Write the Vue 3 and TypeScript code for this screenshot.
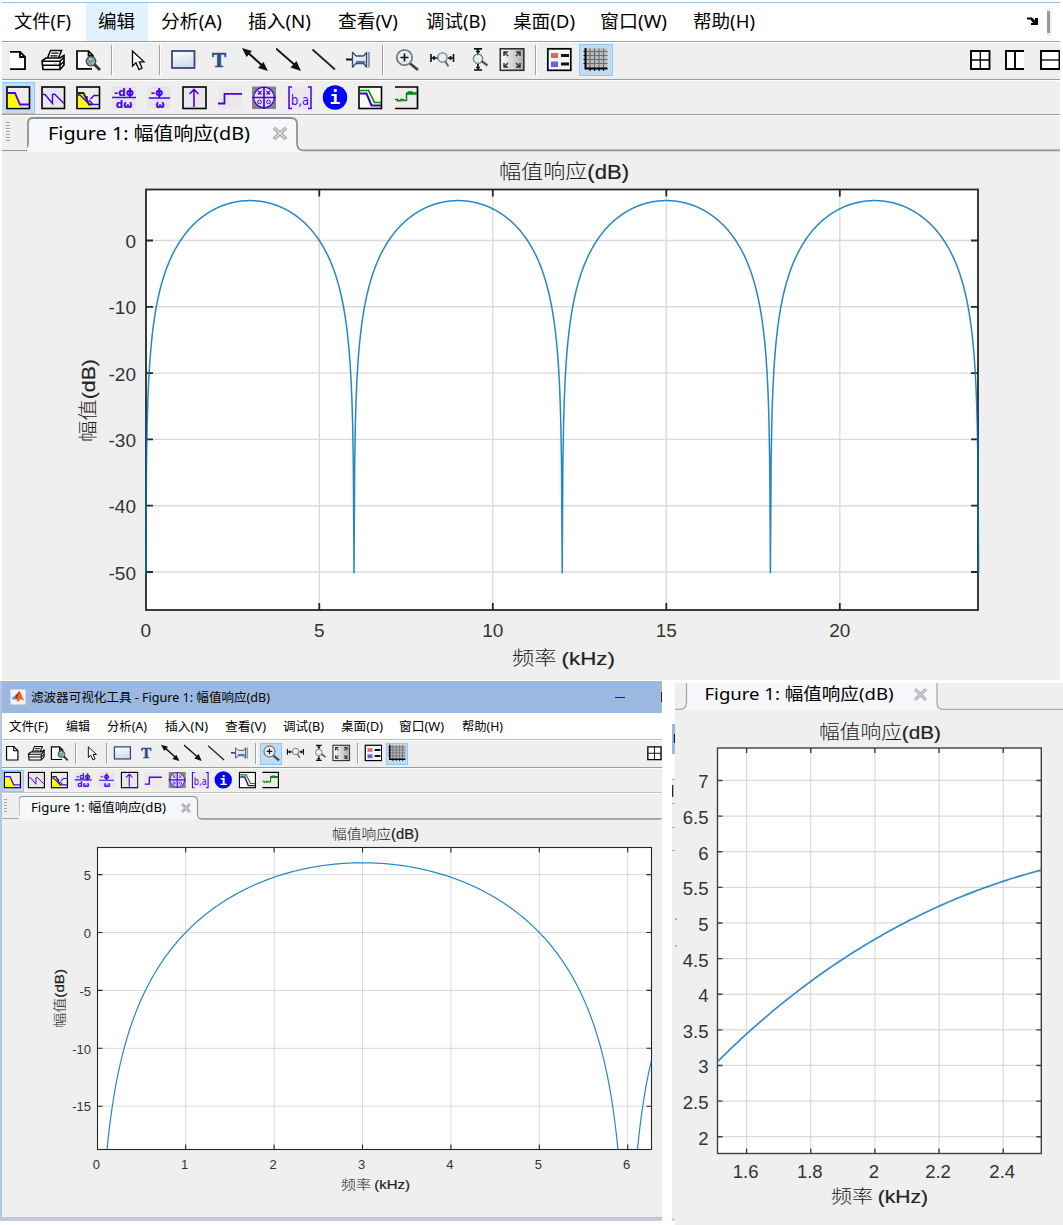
<script setup lang="ts">
interface Tool { icon: string; cx: number; active?: boolean; sep?: boolean }
interface Chart {
  view: [number, number, number, number]
  box: [number, number, number, number]
  x0: number; xs: number; y0: number; ys: number
  range: [number, number]; floor: number; step: number
  xt: [number, string][]; yt: [number, string][]
  font: number; labelY: number; labelX: number; tick: number; grid: number; stroke: number; frame: number
  title: [number, number, number, number]
  xlabel: [number, number, number, number]
  ylabel?: [number, number, number, number]
}

const menus = [
  { t: '文件(F)', x: 14, w: 57, sx: 9, sw: 39 },
  { t: '编辑', x: 98, w: 37, sx: 66, sw: 24, on: true },
  { t: '分析(A)', x: 161, w: 61, sx: 107, sw: 40 },
  { t: '插入(N)', x: 248, w: 63, sx: 165, sw: 43 },
  { t: '查看(V)', x: 338, w: 60, sx: 225, sw: 41 },
  { t: '调试(B)', x: 426, w: 60, sx: 283, sw: 41 },
  { t: '桌面(D)', x: 513, w: 62, sx: 341, sw: 42 },
  { t: '窗口(W)', x: 600, w: 67, sx: 399, sw: 45 },
  { t: '帮助(H)', x: 693, w: 62, sx: 462, sw: 41 },
]

const names1 = ['new', 'print', 'preview', '|', 'pointer', '|', 'rect', 'text', 'arrow2', 'arrow', 'line', 'pin', '|', 'zoomin', 'zoomx', 'zoomy', 'fit', '|', 'legend', 'grid']
const names2 = ['mag', 'phase', 'magphase', 'grpdelay', 'phdelay', 'impulse', 'stepresp', 'pz', 'coef', 'info', 'magest', 'noise']

function row(names: string[], centers: number[], active: string[]): Tool[] {
  return names.map((n, i) => ({ icon: n, cx: centers[i], sep: n === '|', active: active.includes(n) }))
}
const bigRow1 = row(names1, [18, 53, 88, 112, 138, 160, 183, 219, 255, 289, 324, 359, 383, 407, 442, 480, 512, 536, 559, 596], ['grid'])
const bigRow2 = row(names2, [18, 53, 88, 124, 159, 194, 229.5, 264, 300, 335, 370, 406], ['mag'])
const smallRow1 = row(names1, [12, 36, 59.5, 76, 92, 107, 122.5, 146, 170, 193, 216.5, 240, 256, 271, 295, 320, 341.5, 357.5, 373, 397], ['zoomin', 'grid'])
const smallRow2 = row(names2, [12.5, 36, 59.5, 83, 106, 129.5, 153, 177, 200, 223, 247, 270], ['mag'])

// distance from the previous slot's right edge, for slots that share one row
function gap(list: { cx: number }[], i: number, w: number, origin: number): string {
  const prev = i === 0 ? origin : list[i - 1].cx + w / 2
  return list[i].cx - w / 2 - prev + 'px'
}
function menuGap(i: number, small: boolean): string {
  const p = menus[i - 1]
  if (small) return menus[i].sx - (p ? p.sx + p.sw : 2) + 'px'
  return menus[i].x - (p ? p.x + p.w : 2) + 'px'
}

const num = (v: number[]): [number, string][] => v.map(n => [n, String(n)])
const main: Chart = {
  view: [2, 151, 1058, 529], box: [146, 189.5, 978, 610],
  x0: 145.8, xs: 34.7, y0: 240.5, ys: 6.63, range: [0, 24], floor: -50.2, step: 0.02,
  xt: num([0, 5, 10, 15, 20]), yt: num([0, -10, -20, -30, -40, -50]),
  font: 19, labelY: 637, labelX: 136, tick: 7, grid: 1.4, stroke: 1.5, frame: 1.8,
  title: [499, 179, 130, 20], xlabel: [512, 665, 103, 19], ylabel: [95, 442, 83, 19],
}
const zoomed: Chart = {
  view: [2, 819, 660, 398], box: [97.5, 847.5, 651.5, 1149.5],
  x0: 97.3, xs: 88.4, y0: 932.5, ys: 11.58, range: [0.05, 6.267], floor: -30, step: 0.01,
  xt: num([0, 1, 2, 3, 4, 5, 6]), yt: num([5, 0, -5, -10, -15]),
  font: 13, labelY: 1169, labelX: 91, tick: 5, grid: 1, stroke: 1.2, frame: 1.1,
  title: [332, 839, 87, 14], xlabel: [341, 1189, 69, 13], ylabel: [64, 1028, 59, 13],
}
const detail: Chart = {
  view: [675, 710, 388, 515], box: [717.5, 748, 1041.3, 1153.5],
  x0: 233.3, xs: 320.8, y0: 1279.2, ys: 71.25, range: [1.51, 2.519], floor: 0, step: 0.01,
  xt: num([1.6, 1.8, 2, 2.2, 2.4]), yt: num([7, 6.5, 6, 5.5, 5, 4.5, 4, 3.5, 3, 2.5, 2]),
  font: 18.5, labelY: 1178, labelX: 708.5, tick: 5, grid: 1.2, stroke: 1.7, frame: 1.4,
  title: [819, 739, 122, 19], xlabel: [831, 1203, 97, 18],
}
const px = (c: Chart, f: number) => c.x0 + f * c.xs
const py = (c: Chart, d: number) => c.y0 - d * c.ys
// magnitude of 1 - z^-8 at a 48 kHz sample rate, in dB
function curve(c: Chart): string {
  const pts: string[] = []
  const n = Math.round((c.range[1] - c.range[0]) / c.step)
  for (let i = 0; i <= n; i++) {
    const f = c.range[0] + ((c.range[1] - c.range[0]) * i) / n
    const m = Math.abs(2 * Math.sin((Math.PI * f) / 6))
    const d = Math.max(c.floor, 20 * Math.log10(Math.max(m, 1e-6)))
    pts.push(px(c, f).toFixed(2) + ',' + py(c, d).toFixed(2))
  }
  return pts.join(' ')
}
function frameTicks(c: Chart): string {
  const [l, t, r, b] = c.box
  let d = ''
  for (const [v] of c.xt) if (px(c, v) > l + 2) d += `M${px(c, v)} ${t}v${c.tick}M${px(c, v)} ${b}v${-c.tick}`
  for (const [v] of c.yt) d += `M${l} ${py(c, v)}h${c.tick}M${r} ${py(c, v)}h${-c.tick}`
  return d
}
function gridLines(c: Chart): string {
  const [l, t, r, b] = c.box
  let d = ''
  for (const [v] of c.xt) if (px(c, v) > l + 2) d += `M${px(c, v)} ${t}V${b}`
  for (const [v] of c.yt) d += `M${l} ${py(c, v)}H${r}`
  return d
}
const windows = [
  { key: 'big', small: false, row1: bigRow1, row2: bigRow2, chart: main },
  { key: 'small', small: true, row1: smallRow1, row2: smallRow2, chart: zoomed },
]
const allCharts = [main, zoomed, detail]
</script>

<template>
  <div class="page">
    <svg class="defs" width="0" height="0">
      <defs>
        <linearGradient id="sky" x1="0" y1="0" x2="0.3" y2="1"><stop offset="0" stop-color="#fff" /><stop offset="1" stop-color="#cfdcec" /></linearGradient>
        <linearGradient id="steel" x1="0" y1="0" x2="1" y2="0"><stop offset="0" stop-color="#fff" /><stop offset="1" stop-color="#aaa" /></linearGradient>
        <symbol id="i-new" viewBox="0 0 26 26"><path d="M5 5H15L20 10V22H5Z" fill="#fff" /><path d="M5 4.8H15L20 9.8V22.2H5M15 5V10H20" fill="none" stroke="#000" stroke-width="1.8" /></symbol>
        <symbol id="i-newfull" viewBox="0 0 26 26"><path d="M5 3.500H15L21 9.500V22.500H5Z" fill="#fff" stroke="#000" stroke-width="1.700" /><path d="M15 3.500V9.500H21" fill="none" stroke="#000" stroke-width="1.500" /></symbol>
        <symbol id="i-print" viewBox="0 0 26 26"><path d="M7.500 11L10.500 3.500H21.500L18.500 11" fill="#fff" stroke="#000" stroke-width="1.500" /><path d="M11.500 6.200H18.500M10.500 8.800H17.500" stroke="#000" stroke-width="1.200" /><path d="M2 14L6 11H20L24 8.500V18L20 22.500H3Z" fill="#fff" stroke="#000" stroke-width="1.600" /><path d="M2 14.300H20L24 10.500M2.500 18.300H20L24 14.500M20 14V22" fill="none" stroke="#000" stroke-width="1.500" /><path d="M14 16.400h3" stroke="#e6d84a" stroke-width="1.500" /></symbol>
        <symbol id="i-preview" viewBox="0 0 26 26"><path d="M2 4H13.5L18 8.500V22H2Z" fill="#fff" /><path d="M17 21.8H2V4H13.5L18 8.500V11M13.5 4V8.700H18" fill="none" stroke="#000" stroke-width="1.7" /><path d="M19 17L25 23" stroke="#333" stroke-width="2.8" /><circle cx="16" cy="14.2" r="4.8" fill="#8b9aa0" stroke="#444" stroke-width="1.2" /><path d="M14 12.2h3M17 16h2" stroke="#7fe3ec" stroke-width="1.7" /></symbol>
        <symbol id="i-pointer" viewBox="0 0 26 26"><path d="M7.5 4V19L11 15.8L14 22.5L17 21L14.3 14.8H19Z" fill="#fff" stroke="#000" stroke-width="1.3" /></symbol>
        <symbol id="i-rect" viewBox="0 0 26 26"><rect x="2" y="4" width="22.5" height="17" fill="url(#sky)" stroke="#354a7a" stroke-width="1.8" /></symbol>
        <symbol id="i-text" viewBox="0 0 26 26"><text x="13" y="20" text-anchor="middle" font-family="'Liberation Serif', serif" font-weight="700" font-size="21" fill="#334c80" stroke="#334c80" stroke-width=".7">T</text></symbol>
        <symbol id="i-arrow2" viewBox="0 0 26 26"><path d="M4 4L23 21" stroke="#111" stroke-width="2" /><path d="M0 1L10 4L4.500 10ZM26 24L16 21L21.5 15Z" fill="#111" /></symbol>
        <symbol id="i-arrow" viewBox="0 0 26 26"><path d="M0 1.500L20 19" stroke="#111" stroke-width="1.8" /><path d="M25 24L14.500 20.500L20.500 14Z" fill="#111" /></symbol>
        <symbol id="i-line" viewBox="0 0 26 26"><path d="M1.5 2.5L24 22.5" stroke="#222" stroke-width="1.8" /></symbol>
        <symbol id="i-pin" viewBox="0 0 26 26"><path d="M0 12.500H6" stroke="#111" stroke-width="2" /><path d="M6.500 5.500C8.500 6 8.500 9 10.500 9H17C19 9 19 6 20.500 5.500V20C19 19.500 19 16.500 17 16.500H10.500C8.500 16.500 8.500 19.500 6.500 20Z" fill="url(#sky)" stroke="#354a7a" stroke-width="1.3" /><path d="M22.800 5V20.500" stroke="#8898b0" stroke-width="2" /><path d="M10 15H19" stroke="#5273ad" stroke-width="2.200" /></symbol>
        <symbol id="i-zoomin" viewBox="0 0 26 26"><path d="M15.5 16L24 23" stroke="#444" stroke-width="2.8" /><circle cx="10.5" cy="10.5" r="7.7" fill="#e5f0f4" stroke="#777f85" stroke-width="1.8" /><path d="M6.5 10.5H14.5M10.5 6.5V14.5" stroke="#111" stroke-width="1.7" /></symbol>
        <symbol id="i-zoomx" viewBox="0 0 26 26"><path d="M2 7V15M24.5 7V15M2.5 11H9M19 11H24M5 9V13M21.5 9V13" stroke="#111" stroke-width="1.6" /><circle cx="13.5" cy="10.5" r="4.6" fill="#e5f0f4" stroke="#777f85" stroke-width="1.4" /><path d="M16 14L19.5 19.5" stroke="#666" stroke-width="2" /></symbol>
        <symbol id="i-zoomy" viewBox="0 0 26 26"><path d="M7 1.8H15M7 23H15M11 2V8M11 17V23M9 4.5H13M9 20.5H13" stroke="#111" stroke-width="1.7" /><circle cx="11" cy="11.8" r="4.6" fill="#e5f0f4" stroke="#777f85" stroke-width="1.4" /><path d="M14.5 14L20.5 18.5" stroke="#555" stroke-width="2.2" /></symbol>
        <symbol id="i-fit" viewBox="0 0 26 26"><rect x="1.3" y="1.8" width="23.5" height="21.5" fill="url(#steel)" stroke="#333" stroke-width="1.6" /><path d="M5 9V5H9M5 5L9 9M17 5H21V9M21 5L17 9M5 16V20H9M5 20L9 16M21 16V20H17M21 20L17 16" fill="none" stroke="#333" stroke-width="1.5" /></symbol>
        <symbol id="i-legend" viewBox="0 0 26 26"><rect x="1.8" y="1.8" width="23" height="21.5" fill="#f7f7f7" stroke="#000" stroke-width="1.7" /><rect x="5" y="6" width="7" height="5" fill="#e46666" /><rect x="5" y="14.500" width="7" height="5.500" fill="#6464e4" /><path d="M15 8.500h8M15 17h8" stroke="#111" stroke-width="2.800" /></symbol>
        <symbol id="i-grid" viewBox="0 0 26 26"><rect x="2" y="1.500" width="22.500" height="21" fill="#bcbcbc" /><path d="M7 1.500V22M11.500 1.500V22M16 1.500V22M20.500 1.500V22M2 4.500H24.500M2 8.500H24.500M2 12.500H24.500M2 16.500H24.500" stroke="#6e6e6e" stroke-width="1.200" /><path d="M2.500 1V21.500H24.500" fill="none" stroke="#000" stroke-width="2" /><path d="M.5 4.500h2M.5 8.500h2M.5 12.500h2M.5 16.500h2M7 22v2M11.500 22v2M16 22v2M20.500 22v2" stroke="#000" stroke-width="1.200" /></symbol>
        <symbol id="i-mag" viewBox="0 0 26 26"><rect x="2" y="2" width="22.500" height="21.500" fill="#efebec" stroke="#000" stroke-width="1.600" /><path d="M3 8H10L15 19.500V22.500H3Z" fill="#ff0" /><path d="M3 8H10L15 19.500H24" fill="none" stroke="#4800f0" stroke-width="1.800" /></symbol>
        <symbol id="i-phase" viewBox="0 0 26 26"><rect x="2" y="2" width="22.500" height="21.500" fill="#e9e6ec" stroke="#000" stroke-width="1.600" /><path d="M3 9.500H5L12.500 18.500V9.500L14.500 9L24 18.500" fill="none" stroke="#4800f0" stroke-width="1.400" /></symbol>
        <symbol id="i-magphase" viewBox="0 0 26 26"><rect x="2" y="2" width="22.500" height="21.500" fill="#efebec" stroke="#000" stroke-width="1.600" /><path d="M3 8H8.500L14 19.500V22.500H3Z" fill="#ff0" /><path d="M3 8H8.500L14 19.500H17" fill="none" stroke="#222" stroke-width="1.800" /><path d="M3 10H5L12 17V11M24 10.500H19L15.500 14M14 15L18 19.500H24" fill="none" stroke="#4800f0" stroke-width="1.500" /></symbol>
        <symbol id="i-grpdelay" viewBox="0 0 26 26"><rect x="1" y="1.500" width="24" height="22.500" fill="#e7e7ea" /><path d="M1 12.500H25" stroke="#4800f0" stroke-width="1.500" /><text x="13" y="10.800" text-anchor="middle" class="glyph">-dϕ</text><text x="13" y="22.800" text-anchor="middle" class="glyph">dω</text></symbol>
        <symbol id="i-phdelay" viewBox="0 0 26 26"><rect x="1" y="1.500" width="24" height="22.500" fill="#e7e7ea" /><path d="M3 13H24" stroke="#4800f0" stroke-width="1.500" /><text x="11" y="10.800" text-anchor="middle" class="glyph">-ϕ</text><text x="14" y="22.500" text-anchor="middle" class="glyph">ω</text></symbol>
        <symbol id="i-impulse" viewBox="0 0 26 26"><rect x="2" y="2" width="23" height="21.500" fill="#e9e6ec" stroke="#000" stroke-width="1.600" /><path d="M13 22V5M8.500 9L13 4.500L17.500 9" fill="none" stroke="#4800f0" stroke-width="1.600" /></symbol>
        <symbol id="i-stepresp" viewBox="0 0 26 26"><rect x="1" y="1.500" width="24" height="22.500" fill="#ebe9ec" /><path d="M1 18.500H7.500V8.800H25" fill="none" stroke="#4800f0" stroke-width="1.800" /></symbol>
        <symbol id="i-pz" viewBox="0 0 26 26"><rect x="1" y="1.500" width="24" height="22.500" fill="#858585" /><circle cx="13" cy="12.500" r="10.300" fill="#e3e0f2" stroke="#4800f0" stroke-width="1.200" /><path d="M1 12.500H25M13 2V24" stroke="#4800f0" stroke-width="1.700" /><path d="M7 6l3.500 3.500M10.500 6l-3.500 3.500M15.500 6l3.500 3.500M19 6l-3.500 3.500" stroke="#4800f0" stroke-width="1.200" /><circle cx="8.500" cy="17" r="1.800" fill="none" stroke="#4800f0" /><circle cx="17.500" cy="17" r="1.800" fill="none" stroke="#4800f0" /></symbol>
        <symbol id="i-coef" viewBox="0 0 26 26"><rect x="1" y="1.500" width="24" height="22.500" fill="#e9e7ec" /><path d="M5 2H2V23.500H5M21 2H24V23.500H21" fill="none" stroke="#4800f0" stroke-width="1.500" /><text x="13" y="19.500" text-anchor="middle" textLength="18" lengthAdjust="spacingAndGlyphs" class="coef">b,a</text></symbol>
        <symbol id="i-info" viewBox="0 0 26 26"><circle cx="13" cy="12.500" r="12.200" fill="#00f" /><text x="13" y="19" text-anchor="middle" font-family="'DejaVu Sans Mono', monospace" font-weight="700" font-size="18" fill="#fff">i</text></symbol>
        <symbol id="i-magest" viewBox="0 0 26 26"><rect x="2" y="2" width="22.500" height="21.500" fill="#fffbf0" stroke="#000" stroke-width="1.600" /><path d="M3 8.500H9.500L14.500 20.500H24" fill="none" stroke="#3d00c8" stroke-width="2" /><path d="M3 5.500H11.500L17.500 17.500H24" fill="none" stroke="#080" stroke-width="1.600" /></symbol>
        <symbol id="i-noise" viewBox="0 0 26 26"><rect x="2" y="2" width="22.500" height="21.500" fill="#efebec" /><path d="M2 2H24.500V23.500H2" fill="none" stroke="#000" stroke-width="1.700" /><path d="M2 14.500H4.500V15.700H8V14.500H10V15.500H13.500V8" fill="none" stroke="#080" stroke-width="1.500" /><path d="M13 8.500H16V7.500H18.500V8.500H24" fill="none" stroke="#080" stroke-width="2.600" /></symbol>
        <symbol id="i-four" viewBox="0 0 26 26"><path d="M4 4H22.500V22H4Z" fill="#fff" stroke="#000" stroke-width="1.900" /><path d="M13.300 4V22M4 13H22.500" stroke="#000" stroke-width="1.300" /></symbol>
        <symbol id="i-cols" viewBox="0 0 26 26"><rect x="4" y="4" width="19" height="18" fill="#fff" /><path d="M23 4H5V22H23M14 4V22" fill="none" stroke="#000" stroke-width="1.900" /></symbol>
        <symbol id="i-rows" viewBox="0 0 26 26"><path d="M4 4H22.500V22H4Z" fill="#fff" stroke="#000" stroke-width="1.900" /><path d="M4 13H22.500" stroke="#000" stroke-width="1.300" /></symbol>
        <clipPath v-for="(c, i) in allCharts" :id="'clip' + i" :key="i"><rect :x="c.box[0] - 3" :y="c.box[1]" :width="c.box[2] - c.box[0] + 5" :height="c.box[3] - c.box[1]" /></clipPath>
      </defs>
    </svg>

    <div class="layout">
      <section v-for="(w, wi) in windows" :key="w.key" class="win" :class="w.key">
        <header v-if="w.small" class="titlebar">
          <svg class="logo" width="16" height="16" viewBox="0 0 16 16"><rect width="16" height="16" fill="#f4f4f4" stroke="#999" stroke-width=".7" /><path d="M1.500 9L5 7L7 9L4.500 11Z" fill="#4b8fc4" /><path d="M5 7L9.500 2L11 8L7.500 12Z" fill="#a12b17" /><path d="M9.500 2C11 3 12 8 14.500 12L11 10L7.500 13L6.500 10.500Z" fill="#e4651c" /></svg>
          <svg class="caption" width="242" height="20"><text x="0" y="14.500" textLength="239" lengthAdjust="spacingAndGlyphs">滤波器可视化工具 - Figure 1: 幅值响应(dB)</text></svg>
          <span class="min"></span><span class="max"></span>
        </header>
        <nav class="menubar">
          <span v-for="(m, i) in menus" :key="m.t" class="menu" :class="{ on: m.on && !w.small }" :style="{ marginLeft: menuGap(i, w.small), width: (w.small ? m.sw : m.w) + 'px' }">
            <svg class="mtext" :width="w.small ? m.sw : m.w" :height="w.small ? 20 : 30"><text x="0" :y="w.small ? 14.500 : 21" :textLength="w.small ? m.sw : m.w" lengthAdjust="spacingAndGlyphs">{{ m.t }}</text></svg>
          </span>
          <svg v-if="!w.small" class="dock" width="26" height="28" viewBox="0 0 26 28"><path d="M0 11.500V9.500H5L8 12.500V10H11V17H4V15H6L3.500 11.500Z" fill="#000" /><path d="M20 0h4.500v28H20z" fill="#eee" /><path d="M21.500 3V25" stroke="#999" stroke-width="3" /></svg>
        </nav>
        <div class="bar bar1">
          <span v-for="(t, i) in w.row1" :key="i" class="slot" :style="{ marginLeft: gap(w.row1, i, w.small ? 22 : 34, 2) }" :class="{ active: t.active, sep: t.sep }">
            <svg v-if="!t.sep" class="ico"><use :href="'#i-' + (w.small && t.icon === 'new' ? 'newfull' : t.icon)" /></svg>
          </span>
          <span class="layouts">
            <svg class="ico"><use href="#i-four" /></svg>
            <template v-if="!w.small">
              <svg class="ico"><use href="#i-cols" /></svg>
              <svg class="ico last"><use href="#i-rows" /></svg>
            </template>
          </span>
        </div>
        <div class="bar bar2">
          <span v-for="(t, i) in w.row2" :key="i" class="slot" :style="{ marginLeft: gap(w.row2, i, w.small ? 22 : 34, 2) }" :class="{ active: t.active }">
            <svg class="ico"><use :href="'#i-' + t.icon" /></svg>
          </span>
        </div>
        <div class="tabs">
          <span class="grip"></span>
          <svg v-if="!w.small" class="tab" width="1033" height="36" viewBox="27 116 1033 36">
            <path d="M20 151C27 150 28 148 28 143V123Q28 118 33 118H291Q297 118 297 124V143Q297 150 304 150.500V152H20Z" fill="#f7f8fb" />
            <path d="M22 150.300Q28 149 28 143V123Q28 118 33 118H291Q297 118 297 124V143Q297 150 303 150.300H1060" fill="none" stroke="#929292" stroke-width="1.800" />
            <text x="48" y="139.500" font-size="18.500" textLength="202" lengthAdjust="spacingAndGlyphs">Figure 1: 幅值响应(dB)</text>
            <path d="M274 128L286 139M286 128L274 139" stroke="#9c9c9c" stroke-width="3.600" /><path d="M274.500 128.500L285.500 138.500M285.500 128.500L274.500 138.500" stroke="#e4e4e4" stroke-width="1.400" />
          </svg>
          <svg v-else class="tab" width="642" height="26" viewBox="20 793 642 26">
            <path d="M15 818.500Q20 818 20 813V799Q20 795.500 23.500 795.500H194Q198.500 795.500 198.500 800V813Q198.500 818 203 818.500Z" fill="#f7f8fb" />
            <path d="M15 818.300Q20 818 20 813V799Q20 795.500 23.500 795.500H194Q198.500 795.500 198.500 800V813Q198.500 818 203 818.300H662" fill="none" stroke="#929292" stroke-width="1.100" />
            <text x="32" y="810.500" font-size="12.500" textLength="135" lengthAdjust="spacingAndGlyphs">Figure 1: 幅值响应(dB)</text>
            <path d="M183 803L191 811M191 803L183 811" stroke="#a0a0a0" stroke-width="2.500" /><path d="M183 803L191 811M191 803L183 811" stroke="#e8e8e8" stroke-width=".8" />
          </svg>
        </div>
        <svg class="chart" :width="w.chart.view[2]" :height="w.chart.view[3]" :viewBox="w.chart.view.join(' ')">
          <rect :x="w.chart.box[0]" :y="w.chart.box[1]" :width="w.chart.box[2] - w.chart.box[0]" :height="w.chart.box[3] - w.chart.box[1]" fill="#fff" />
          <path :d="gridLines(w.chart)" stroke="#262626" stroke-opacity=".17" :stroke-width="w.chart.grid" />
          <rect :x="w.chart.box[0]" :y="w.chart.box[1]" :width="w.chart.box[2] - w.chart.box[0]" :height="w.chart.box[3] - w.chart.box[1]" fill="none" stroke="#262626" :stroke-width="w.chart.frame" />
          <path :d="frameTicks(w.chart)" stroke="#262626" :stroke-width="w.chart.frame" />
          <polyline :points="curve(w.chart)" fill="none" stroke="#0072bd" stroke-opacity=".85" :stroke-width="w.chart.stroke" :clip-path="`url(#clip${wi})`" />
          <g class="num" :font-size="w.chart.font">
            <text v-for="[v, s] in w.chart.xt" :key="'x' + s" :x="px(w.chart, v) - (w.small ? 1 : 0)" :y="w.chart.labelY" text-anchor="middle">{{ s }}</text>
            <text v-for="[v, s] in w.chart.yt" :key="'y' + s" :x="w.chart.labelX" :y="py(w.chart, v) + w.chart.font * 0.4" text-anchor="end">{{ s }}</text>
          </g>
          <text class="label" :x="w.chart.title[0]" :y="w.chart.title[1]" :textLength="w.chart.title[2]" :font-size="w.chart.title[3]" lengthAdjust="spacingAndGlyphs"><tspan>幅值响应</tspan><tspan class="lat">(dB)</tspan></text>
          <text class="label" :x="w.chart.xlabel[0]" :y="w.chart.xlabel[1]" :textLength="w.chart.xlabel[2]" :font-size="w.chart.xlabel[3]" lengthAdjust="spacingAndGlyphs"><tspan>频率 </tspan><tspan class="lat">(kHz)</tspan></text>
          <text v-if="w.chart.ylabel" class="label" :transform="`translate(${w.chart.ylabel[0]} ${w.chart.ylabel[1]}) rotate(-90)`" :textLength="w.chart.ylabel[2]" :font-size="w.chart.ylabel[3]" lengthAdjust="spacingAndGlyphs"><tspan>幅值</tspan><tspan class="lat">(dB)</tspan></text>
        </svg>
      </section>

      <section class="side">
        <div class="edge">
          <svg width="3" height="542" viewBox="672 683 3 542">
            <rect x="672" y="724" width="3" height="30" fill="#9bb9e0" /><rect x="672" y="779" width="3" height="441" fill="#efefef" />
            <path d="M672 779.500h3M672 803.500h3M672 827.500h3M672 850.500h3" stroke="#aaa" />
            <path d="M674.500 734v9M672.700 785v12" stroke="#111" stroke-width="1.200" /><path d="M672 1219.500h3" stroke="#b7c7de" stroke-width="2" />
          </svg>
        </div>
        <div class="sidebody">
          <svg class="sidetab" width="388" height="27" viewBox="675 683 388 27">
            <path d="M684 710Q687 708 687 703V683H937V710Z" fill="#f6f7fa" />
            <path d="M675 709.300H680Q686.500 709 686.500 703V683M937 683V703Q937 709.300 943 709.300H1063" fill="none" stroke="#aaa" stroke-width="1.300" />
            <text x="704.500" y="699.500" font-size="17" textLength="189" lengthAdjust="spacingAndGlyphs">Figure 1: 幅值响应(dB)</text>
            <path d="M915 689L926 700M926 689L915 700" stroke="#aaa" stroke-width="3" /><path d="M915 689L926 700M926 689L915 700" stroke="#eee" stroke-width=".9" />
          </svg>
          <svg class="chart" width="388" height="515" :viewBox="detail.view.join(' ')">
            <path d="M675 919h1.500M675 946h1.500" stroke="#555" stroke-width="1.200" />
            <rect :x="detail.box[0]" :y="detail.box[1]" :width="detail.box[2] - detail.box[0]" :height="detail.box[3] - detail.box[1]" fill="#fff" />
            <path :d="gridLines(detail)" stroke="#262626" stroke-opacity=".17" :stroke-width="detail.grid" />
            <rect :x="detail.box[0]" :y="detail.box[1]" :width="detail.box[2] - detail.box[0]" :height="detail.box[3] - detail.box[1]" fill="none" stroke="#404040" :stroke-width="detail.frame" />
            <path :d="frameTicks(detail)" stroke="#404040" :stroke-width="detail.frame" />
            <polyline :points="curve(detail)" fill="none" stroke="#0072bd" stroke-opacity=".8" :stroke-width="detail.stroke" clip-path="url(#clip2)" />
            <g class="num" :font-size="detail.font">
              <text v-for="[v, s] in detail.xt" :key="'x' + s" :x="px(detail, v) - 1" :y="detail.labelY" text-anchor="middle">{{ s }}</text>
              <text v-for="[v, s] in detail.yt" :key="'y' + s" :x="detail.labelX" :y="py(detail, v) + 8" text-anchor="end">{{ s }}</text>
            </g>
            <text class="label" :x="detail.title[0]" :y="detail.title[1]" :textLength="detail.title[2]" :font-size="detail.title[3]" lengthAdjust="spacingAndGlyphs"><tspan>幅值响应</tspan><tspan class="lat">(dB)</tspan></text>
            <text class="label" :x="detail.xlabel[0]" :y="detail.xlabel[1]" :textLength="detail.xlabel[2]" :font-size="detail.xlabel[3]" lengthAdjust="spacingAndGlyphs"><tspan>频率 </tspan><tspan class="lat">(kHz)</tspan></text>
          </svg>
        </div>
      </section>
    </div>
  </div>
</template>

<style>
body { margin: 0; background: #fff; }
</style>

<style scoped>
.page { width: 1063px; height: 1225px; overflow: hidden; background: #fff; font-family: "Noto Sans", "Noto Sans CJK SC", sans-serif; color: #000; }
.defs { display: block; }
svg { flex: none; display: block; }
.layout { display: grid; grid-template-columns: 662px 10px 391px; grid-template-rows: 681px 544px; }
.win { display: flex; flex-direction: column; background: #efefef; box-sizing: border-box; overflow: hidden; }
.win.big { grid-column: 1 / 4; width: 1058px; height: 678px; margin: 2px 0 0 2px; border-top: 1px solid #9bbde3; }
.win.small { grid-column: 1; width: 662px; height: 538px; border-left: 2px solid #b4c6e2; border-bottom: 2px solid #b7c7de; box-shadow: 0 2px 0 #c9cacd; }
.titlebar { height: 32px; flex: none; background: #9bb9e0; display: flex; align-items: center; }
.logo { margin-left: 8px; }
.caption { margin-left: 5px; font-size: 12.5px; }
.min { width: 10px; height: 1px; background: #222; margin-left: 342px; }
.max { width: 1px; height: 10px; background: #222; margin-left: auto; }
.menubar { display: flex; flex: none; background: #fff; box-sizing: border-box; }
.big .menubar { height: 39px; border-bottom: 1px solid #9d9d9d; font-size: 18px; }
.small .menubar { height: 27px; border-bottom: 1px solid #bbb; font-size: 12.3px; align-items: center; }
.menu { flex: none; display: flex; align-items: center; }
.on { background: #e1f1fd; box-shadow: -12px 0 #e1f1fd, 13px 0 #e1f1fd; }
.mtext { overflow: visible; }
.dock { margin: 5px 7px 0 auto; }
.bar { display: flex; flex: none; align-items: center; box-sizing: border-box; border-bottom: 1px solid #9d9d9d; border-top: 1px solid #fff; }
.big .bar1 { height: 38px; padding-bottom: 2px; }
.big .bar2 { height: 35px; }
.small .bar1 { height: 28px; padding-bottom: 1px; }
.small .bar2 { height: 25px; border-bottom-color: #c4c4c4; }
.slot { flex: none; display: flex; justify-content: center; align-items: center; box-sizing: border-box; }
.big .slot { width: 34px; height: 32px; }
.small .slot { width: 22px; height: 22px; }
.ico { width: 26px; height: 26px; }
.small .ico { width: 18.500px; height: 18.500px; }
.active { background: #c0dcf3; border: 1px solid #90c8f6; }
.sep::before { content: ""; width: 1.5px; height: 30px; background: #a3a3a3; border-right: 1px solid #fff; }
.small .sep::before { width: 1px; height: 21px; }
.layouts { margin-left: auto; display: flex; }
.big .layouts { margin-right: -3px; gap: 8px; }
.small .layouts { margin-right: -1px; }
.last { margin-left: 2px; }
.tabs { display: flex; flex: none; border-top: 1px solid #fff; box-sizing: border-box; }
.big .tabs { height: 36px; box-shadow: inset 0 -1px #929292; }
.small .tabs { height: 26px; box-shadow: inset 0 -1px #a8a8a8; }
.grip { flex: none; background: repeating-linear-gradient(#a5a5a5 0 1px, #efefef 1px 3px); }
.big .grip { width: 4px; height: 21px; margin: 6px 17px 0 4px; }
.small .grip { width: 3px; height: 15px; margin: 5px 12px 0 2px; }
.tab, .sidetab { font-family: "Noto Sans", "Noto Sans CJK SC", sans-serif; }
.num { font-family: "Liberation Sans", Arial, sans-serif; fill: #333; }
.label { font-family: "Noto Sans CJK SC", sans-serif; fill: #1c1c1c; font-weight: 300; }
.lat { font-family: "Liberation Sans", Arial, sans-serif; fill: #222; stroke: #222; stroke-width: .2px; }
.glyph { font: 700 10.5px "DejaVu Sans", sans-serif; fill: #4800f0; }
.coef { font: 14px "DejaVu Sans", sans-serif; fill: #4800f0; }
.side { grid-column: 3; display: flex; padding-top: 2px; }
.edge { width: 3px; }
.sidebody { width: 388px; background: #efefef; }
</style>
